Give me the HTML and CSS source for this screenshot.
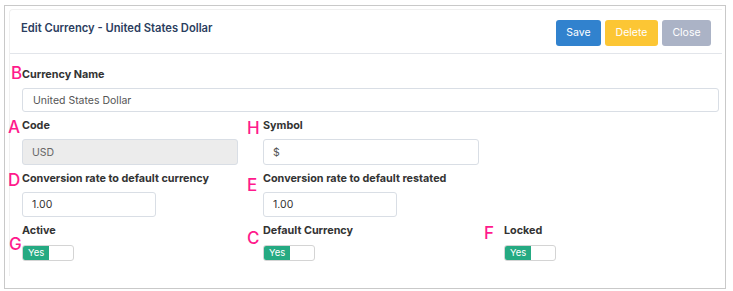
FILE: index.html
```html
<!DOCTYPE html>
<html lang="en">
<head>
  <meta charset="UTF-8" />
  <title>Edit Currency</title>
  <link rel="stylesheet" href="styles.css">
</head>
<body>
  <div class="frame">
    <div class="card">
      <div class="card-header">
        <h2>Edit Currency - United States Dollar</h2>
        <div class="actions">
          <button class="btn btn-save">Save</button>
          <button class="btn btn-delete">Delete</button>
          <button class="btn btn-close">Close</button>
        </div>
      </div>

      <div class="card-body">
        <div class="field field-full">
          <span class="mark mark-b">B</span>
          <label>Currency Name</label>
          <input class="input input-name" type="text" value="United States Dollar">
        </div>

        <div class="row">
          <div class="field">
            <span class="mark mark-a">A</span>
            <label>Code</label>
            <input class="input input-wide input-disabled" type="text" value="USD" disabled>
          </div>
          <div class="field">
            <span class="mark mark-h">H</span>
            <label>Symbol</label>
            <input class="input input-wide" type="text" value="$">
          </div>
        </div>

        <div class="row">
          <div class="field">
            <span class="mark mark-d">D</span>
            <label>Conversion rate to default currency</label>
            <input class="input input-short" type="text" value="1.00">
          </div>
          <div class="field">
            <span class="mark mark-e">E</span>
            <label>Conversion rate to default restated</label>
            <input class="input input-short" type="text" value="1.00">
          </div>
        </div>

        <div class="row">
          <div class="field">
            <span class="mark mark-g">G</span>
            <label>Active</label>
            <div class="toggle"><span class="toggle-on">Yes</span></div>
          </div>
          <div class="field">
            <span class="mark mark-c">C</span>
            <label>Default Currency</label>
            <div class="toggle"><span class="toggle-on">Yes</span></div>
          </div>
          <div class="field">
            <span class="mark mark-f">F</span>
            <label>Locked</label>
            <div class="toggle"><span class="toggle-on">Yes</span></div>
          </div>
        </div>
      </div>
    </div>
  </div>
</body>
</html>
```

FILE: styles.css
```css
* {
  margin: 0;
  padding: 0;
  box-sizing: border-box;
  font-family: Inter, 'Noto Sans', sans-serif;
}

body {
  background: #ffffff;
}

.frame {
  width: 722px;
  height: 284px;
  margin: 5px 0 0 4px;
  border: 1px solid #c9c9c9;
  padding: 3px 3px 0 4px;
}

.card {
  height: 267px;
  border-left: 1px solid #f0f0f0;
  border-top: 1px solid #f0f0f0;
  border-radius: 4px 0 0 0;
}

.card-header {
  display: flex;
  align-items: center;
  justify-content: space-between;
  height: 44px;
  padding: 0 11px 0 11px;
  border-bottom: 1px solid #e2e5ea;
}

.card-header h2 {
  font-size: 11.2px;
  font-weight: 600;
  color: #2b3d5e;
  margin-top: -7px;
}

.actions {
  display: flex;
  gap: 4px;
  margin-top: 2px;
}

.btn {
  height: 26px;
  border: none;
  border-radius: 3px;
  color: #ffffff;
  font-size: 10.5px;
  padding: 0 10px;
}

.btn-save {
  width: 45px;
  background: #3182ce;
}

.btn-delete {
  width: 53px;
  background: #fcc634;
}

.btn-close {
  width: 49px;
  background: #abb3c6;
}

.card-body {
  padding: 14px 0 0 12px;
}

.row {
  display: grid;
  grid-template-columns: 241px 241px 241px;
  margin-top: 7px;
}

.field {
  position: relative;
  display: flex;
  flex-direction: column;
  align-items: flex-start;
}

.field label {
  font-size: 10.8px;
  font-weight: 700;
  color: #333333;
  line-height: 14px;
  margin-bottom: 6px;
}

.input {
  height: 26px;
  border: 1px solid #d9dee5;
  border-radius: 3px;
  padding: 0 9px;
  font-size: 10.5px;
  color: #555555;
  background: #ffffff;
}

.input-name {
  width: 697px;
  height: 24px;
  padding: 0 10px;
}

.input-wide {
  width: 216px;
}

.input-short {
  width: 134px;
  height: 25px;
  color: #333333;
}

.input-disabled {
  background: #ececec;
  color: #666666;
}

.toggle {
  display: flex;
  width: 52px;
  height: 16px;
  border: 1px solid #d4d4d4;
  border-radius: 3px;
  overflow: hidden;
  margin-top: 1px;
}

.toggle-on {
  width: 26px;
  background: #25aa82;
  color: #ffffff;
  font-size: 9.5px;
  line-height: 14px;
  padding-left: 5px;
}

/* annotation letters */
.mark {
  position: absolute;
  font-size: 17px;
  font-weight: 500;
  line-height: 16px;
  color: #ff1a8c;
}

.mark-b { left: -11px; top: -3px; }
.mark-a { left: -14px; top: 0; }
.mark-h { left: -16px; top: 1px; }
.mark-d { left: -14px; top: 0; }
.mark-e { left: -16px; top: 5px; }
.mark-g { left: -13px; top: 12px; }
.mark-c { left: -16px; top: 6px; }
.mark-f { left: -20px; top: 1px; }
```
